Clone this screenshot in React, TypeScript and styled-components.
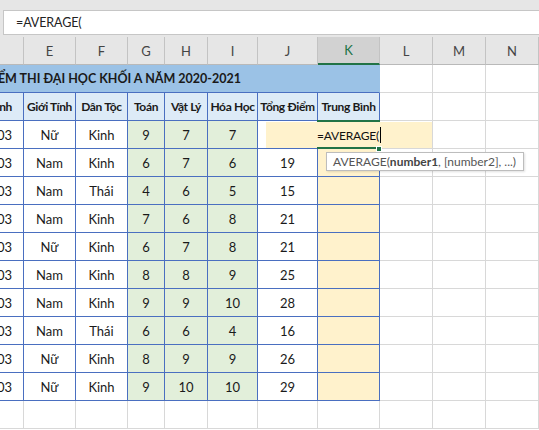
import React from "react";
import styled, { createGlobalStyle, css } from "styled-components";

const COLS = "24px 52px 52px 37px 43px 50px 60px 62px 53px 53px 53px";
const LETTERS = ["", "E", "F", "G", "H", "I", "J", "K", "L", "M", "N"];
const HEADERS = ["nh", "Giới Tính", "Dân Tộc", "Toán", "Vật Lý", "Hóa Học", "Tổng Điểm", "Trung Bình"];

const rows = [
  ["03", "Nữ", "Kinh", "9", "7", "7", ""],
  ["03", "Nam", "Kinh", "6", "7", "6", "19"],
  ["003", "Nam", "Thái", "4", "6", "5", "15"],
  ["03", "Nam", "Kinh", "7", "6", "8", "21"],
  ["03", "Nữ", "Kinh", "6", "7", "8", "21"],
  ["03", "Nam", "Kinh", "8", "8", "9", "25"],
  ["03", "Nam", "Kinh", "9", "9", "10", "28"],
  ["03", "Nam", "Thái", "6", "6", "4", "16"],
  ["03", "Nữ", "Kinh", "8", "9", "9", "26"],
  ["003", "Nữ", "Kinh", "9", "10", "10", "29"],
];

const GlobalStyle = createGlobalStyle`
  body {
    margin: 0;
    background: #ffffff;
    font-family: Lato, "Liberation Sans", sans-serif;
  }
`;

const Page = styled.div`
  width: 539px;
  height: 430px;
  overflow: hidden;
  background: #ffffff;
  color: #1a1a1a;
`;

const FormulaStrip = styled.div`
  box-sizing: border-box;
  height: 37px;
  padding: 10px 0 2px 3px;
  background: #e6e6e6;
`;

const FormulaInput = styled.div`
  box-sizing: border-box;
  height: 25px;
  display: flex;
  align-items: center;
  padding-left: 12px;
  background: #ffffff;
  border: 1px solid #c6c6c6;
  border-right: none;
  font-size: 12.5px;
  letter-spacing: -0.1px;
  color: #222;
`;

const Sheet = styled.div`
  position: relative;
  display: grid;
  grid-template-columns: ${COLS};
  grid-auto-rows: 28px;
`;

const ColHead = styled.div<{ $active?: boolean }>`
  box-sizing: border-box;
  display: flex;
  align-items: center;
  justify-content: center;
  background: #e6e6e6;
  border-right: 1px solid #c3c3c3;
  border-bottom: 1px solid #b9b9b9;
  font-size: 13px;
  color: #444;
  ${(p) =>
    p.$active &&
    css`
      background: #d2d2d2;
      color: #217346;
      border-bottom: 2px solid #217346;
    `}
`;

const Cell = styled.div<{ $bg?: string; $bold?: boolean; $table?: boolean; $end?: boolean }>`
  box-sizing: border-box;
  display: flex;
  align-items: center;
  justify-content: ${(p) => (p.$end ? "flex-end" : "center")};
  padding-right: ${(p) => (p.$end ? "11px" : "0")};
  overflow: hidden;
  white-space: nowrap;
  background: ${(p) => p.$bg || "#ffffff"};
  border-right: 1px solid ${(p) => (p.$table ? "#4a6fc0" : "#d8d8d8")};
  border-bottom: 1px solid ${(p) => (p.$table ? "#4a6fc0" : "#d8d8d8")};
  font-size: ${(p) => (p.$bold ? "12px" : "13px")};
  letter-spacing: ${(p) => (p.$bold ? "-0.35px" : "0")};
  font-weight: ${(p) => (p.$bold ? 700 : 400)};
`;

const TitleCell = styled.div`
  box-sizing: border-box;
  grid-column: span 8;
  display: flex;
  align-items: center;
  justify-content: flex-end;
  padding-right: 138px;
  overflow: hidden;
  white-space: nowrap;
  background: #9bc2e6;
  border-right: 1px solid #9bc2e6;
  border-bottom: 1px solid #4a6fc0;
  font-size: 12.5px;
  font-weight: 700;
`;

const Editor = styled.div`
  position: absolute;
  left: 266px;
  top: 85px;
  width: 166px;
  height: 26px;
  display: flex;
  align-items: center;
  justify-content: center;
  background: #fff2cc;
  font-size: 12px;
  letter-spacing: -0.2px;
  color: #111;
`;

const Caret = styled.span`
  display: inline-block;
  width: 1px;
  height: 16px;
  margin-left: 1px;
  background: #000;
`;

const ActiveFrame = styled.div`
  position: absolute;
  left: 317px;
  top: 83px;
  width: 63px;
  height: 29px;
  box-sizing: border-box;
  border-top: 2px solid #217346;
  border-bottom: 2px solid #217346;
`;

const Handle = styled.div`
  position: absolute;
  left: 376px;
  top: 109px;
  width: 6px;
  height: 6px;
  background: #217346;
  border: 1px solid #ffffff;
  box-sizing: border-box;
`;

const Tip = styled.div`
  position: absolute;
  left: 326px;
  top: 115px;
  height: 19px;
  box-sizing: border-box;
  display: flex;
  align-items: center;
  padding: 0 7px 0 6px;
  background: #ffffff;
  border: 1px solid #bdbdbd;
  box-shadow: 1px 1px 2px rgba(0, 0, 0, 0.12);
  font-size: 12px;
  color: #555;
  white-space: nowrap;

  b {
    font-weight: 700;
    color: #444;
  }
`;

const GREEN = "#e2efda";
const YELLOW = "#fff2cc";

const App = () => (
  <Page>
    <GlobalStyle />
    <FormulaStrip>
      <FormulaInput>=AVERAGE(</FormulaInput>
    </FormulaStrip>
    <Sheet>
      {LETTERS.map((l, i) => (
        <ColHead key={i} $active={l === "K"}>
          {l}
        </ColHead>
      ))}

      <TitleCell>
        <span>BẢNG ĐIỂM THI ĐẠI HỌC KHỐI A NĂM 2020-2021</span>
      </TitleCell>
      <Cell />
      <Cell />
      <Cell />

      {HEADERS.map((h, i) => (
        <Cell key={h} $table $bold $bg="#ddebf7" $end={i === 0}>
          {h}
        </Cell>
      ))}
      <Cell />
      <Cell />
      <Cell />

      {rows.map((r, ri) => (
        <React.Fragment key={ri}>
          <Cell $table $end>
            {r[0]}
          </Cell>
          <Cell $table>{r[1]}</Cell>
          <Cell $table>{r[2]}</Cell>
          <Cell $table $bg={GREEN}>{r[3]}</Cell>
          <Cell $table $bg={GREEN}>{r[4]}</Cell>
          <Cell $table $bg={GREEN}>{r[5]}</Cell>
          <Cell $table>{r[6]}</Cell>
          <Cell $table $bg={YELLOW} />
          <Cell />
          <Cell />
          <Cell />
        </React.Fragment>
      ))}

      {LETTERS.map((_, i) => (
        <Cell key={"e" + i} />
      ))}

      <Editor>
        =AVERAGE(
        <Caret />
      </Editor>
      <ActiveFrame />
      <Handle />
      <Tip>
        AVERAGE(<b>number1</b>, [number2], ...)
      </Tip>
    </Sheet>
  </Page>
);

export default App;
